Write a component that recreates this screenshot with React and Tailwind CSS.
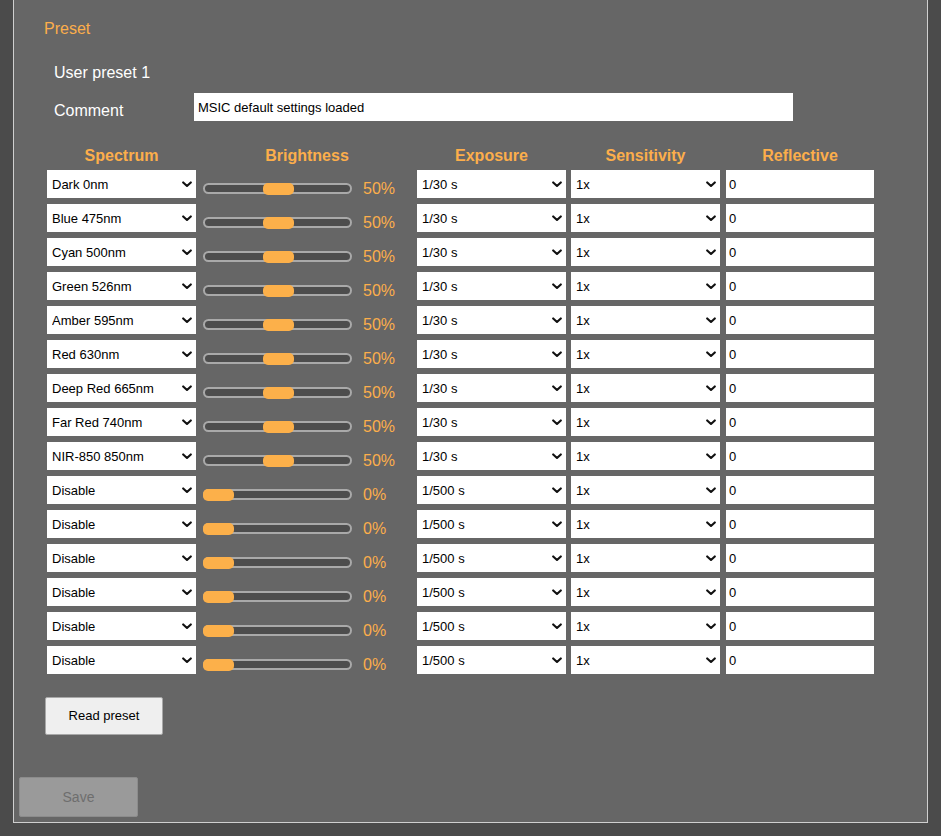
import React from 'react';

const ORANGE = 'text-[#fcae4b]';

const ROWS = [
  { spectrum: 'Dark 0nm', brightness: 50, exposure: '1/30 s' },
  { spectrum: 'Blue 475nm', brightness: 50, exposure: '1/30 s' },
  { spectrum: 'Cyan 500nm', brightness: 50, exposure: '1/30 s' },
  { spectrum: 'Green 526nm', brightness: 50, exposure: '1/30 s' },
  { spectrum: 'Amber 595nm', brightness: 50, exposure: '1/30 s' },
  { spectrum: 'Red 630nm', brightness: 50, exposure: '1/30 s' },
  { spectrum: 'Deep Red 665nm', brightness: 50, exposure: '1/30 s' },
  { spectrum: 'Far Red 740nm', brightness: 50, exposure: '1/30 s' },
  { spectrum: 'NIR-850 850nm', brightness: 50, exposure: '1/30 s' },
  { spectrum: 'Disable', brightness: 0, exposure: '1/500 s' },
  { spectrum: 'Disable', brightness: 0, exposure: '1/500 s' },
  { spectrum: 'Disable', brightness: 0, exposure: '1/500 s' },
  { spectrum: 'Disable', brightness: 0, exposure: '1/500 s' },
  { spectrum: 'Disable', brightness: 0, exposure: '1/500 s' },
  { spectrum: 'Disable', brightness: 0, exposure: '1/500 s' },
];

const SPECTRA = ['Disable', 'Dark 0nm', 'Blue 475nm', 'Cyan 500nm', 'Green 526nm', 'Amber 595nm', 'Red 630nm', 'Deep Red 665nm', 'Far Red 740nm', 'NIR-850 850nm'];
const EXPOSURES = ['1/30 s', '1/60 s', '1/125 s', '1/250 s', '1/500 s'];
const SENSITIVITIES = ['1x', '2x', '4x', '8x'];

function Select({ value, options, className }) {
  return (
    <div className={`relative h-[28px] ${className}`}>
      <select
        defaultValue={value}
        className="appearance-none w-full h-full bg-white text-black text-[13px] pl-[5px] pr-[18px] pt-[1px] outline-none rounded-none"
      >
        {options.map((o) => <option key={o}>{o}</option>)}
      </select>
      <svg className="absolute right-[4px] top-[11px] pointer-events-none" width="10" height="7" viewBox="0 0 10 7">
        <path d="M1.2 1.4 L5 5 L8.8 1.4" fill="none" stroke="#111" strokeWidth="2.1" strokeLinecap="round" strokeLinejoin="round" />
      </svg>
    </div>
  );
}

function Slider({ value }) {
  return (
    <div className="relative w-[149px] h-[11px] rounded-full border-2 border-[#a9a9a9] bg-[#4d4d4d]">
      <div className="absolute top-[-2px] h-[12px] w-[31px] rounded-[5px] bg-[#fcb04a]" style={{ left: -2 + (value / 100) * 120 }} />
    </div>
  );
}

function Row({ row }) {
  return (
    <div className="flex h-[28px]">
      <Select value={row.spectrum} options={SPECTRA} className="w-[149px] mr-[7px]" />
      <div className="w-[208px] mr-[6px] flex items-center pt-[9px]">
        <Slider value={row.brightness} />
        <span className={`ml-[11px] text-[16px] leading-[18px] self-end ${ORANGE}`}>{row.brightness}%</span>
      </div>
      <Select value={row.exposure} options={EXPOSURES} className="w-[149px] mr-[5px]" />
      <Select value="1x" options={SENSITIVITIES} className="w-[149px] mr-[6px]" />
      <input defaultValue="0" className="w-[148px] h-[28px] bg-white text-black text-[13px] px-[3px] pt-[1px] outline-none" />
    </div>
  );
}

export default function App() {
  return (
    <div className="min-h-[836px] bg-[#4b4b4b] pl-[13px]" style={{ fontFamily: '"Liberation Sans", Arial, sans-serif' }}>
      <div className="w-[915px] h-[823px] bg-[#666666] border-x border-b border-[#cfcfcf] flex flex-col">
        <div className={`ml-[30px] mt-[20px] text-[16px] leading-[18px] ${ORANGE}`}>Preset</div>
        <div className="ml-[40px] mt-[26px] text-[16px] leading-[18px] text-white">User preset 1</div>
        <div className="ml-[40px] mt-[11px] flex items-center">
          <span className="w-[140px] text-[16px] leading-[18px] text-white pt-[8px]">Comment</span>
          <input
            defaultValue="MSIC default settings loaded"
            className="w-[599px] h-[28px] bg-white text-black text-[13px] px-[4px] pt-[1px] outline-none"
          />
        </div>

        <div className="ml-[33px] mt-[25px] flex flex-col gap-[6px]">
          <div className={`flex h-[18px] pt-[1px] text-[16px] leading-[18px] font-bold ${ORANGE}`}>
            <div className="w-[149px] mr-[7px] text-center">Spectrum</div>
            <div className="w-[208px] mr-[6px] text-center">Brightness</div>
            <div className="w-[149px] mr-[5px] text-center">Exposure</div>
            <div className="w-[149px] mr-[6px] text-center">Sensitivity</div>
            <div className="w-[148px] text-center">Reflective</div>
          </div>
          {ROWS.map((row, i) => <Row key={i} row={row} />)}
        </div>

        <button className="ml-[31px] mt-[23px] w-[118px] h-[38px] bg-[#efefef] border border-[#a8a8a8] rounded-[2px] text-[13px] text-black">
          Read preset
        </button>
        <button disabled className="ml-[5px] mt-[42px] w-[119px] h-[40px] bg-[#9a9a9a] border border-[#8c8c8c] rounded-[2px] text-[14px] text-[#6e6e6e]">
          Save
        </button>
      </div>
    </div>
  );
}
